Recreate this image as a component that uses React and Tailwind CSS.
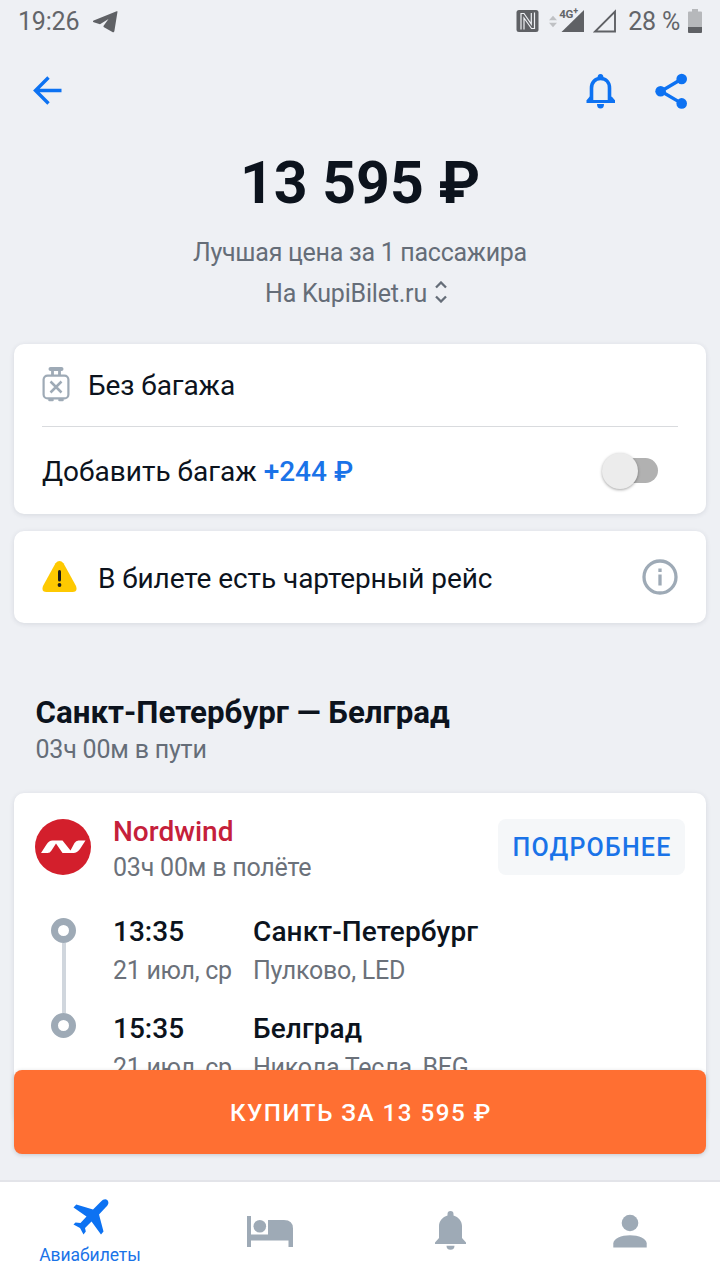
import { useState } from "react";

const stops = [
  { time: "13:35", date: "21 июл, ср", city: "Санкт-Петербург", airport: "Пулково, LED" },
  { time: "15:35", date: "21 июл, ср", city: "Белград", airport: "Никола Тесла, BEG" },
];

const StatusBar = () => (
  <div className="flex h-[42px] shrink-0 items-center pl-[18px] pr-[18px] text-[25px] tracking-[-0.2px] text-[#636569]">
    <span className="mt-px">19:26</span>
    <svg className="ml-[14px] mt-px h-[22px] w-[25px]" viewBox="0 0 25 22" fill="#5f6165">
      <path d="M24.500.8 21.400 20c-.2 1-1 1.600-2 1.100L11 16.200c-.8-.6-.7-1.100-.2-1.700L15.500 8 7 13.300l-6.300-2c-1.200-.5-1.200-1.300 0-1.800L23 .6c1-.4 1.600-.4 1.500.2Z" />
    </svg>
    <div className="ml-auto flex items-center">
      <svg className="h-[22px] w-[23px]" viewBox="0 0 23 22">
        <rect x=".5" width="22" height="22" rx="2.500" fill="#5f6165" />
        <path d="M5 19.500V3.500H8l7.300 10.500V3M18.500 2.500v16h-3L8 8v11.500" fill="none" stroke="#eef0f4" strokeWidth="1.200" />
      </svg>
      <svg className="ml-[10px] h-[13px] w-[8px]" viewBox="0 0 9 13" fill="#bfc1c4">
        <path d="M4.500 0 9 5H0ZM4.500 13 0 8h9Z" />
      </svg>
      <div className="relative">
        <svg className="ml-[4px] h-[24px] w-[24px]" viewBox="0 0 24 24" fill="#5f6165">
          <path d="M23 1v22H.5Z" />
        </svg>
        <span className="absolute -top-[2px] left-[2px] flex text-[11.5px] leading-[14px] font-bold">
          4G<span className="-mt-[2px] text-[9px] leading-[12px] font-bold">+</span>
        </span>
      </div>
      <svg className="ml-[8px] h-[24px] w-[24px]" viewBox="0 0 24 24" fill="none" stroke="#5f6165" strokeWidth="1.900">
        <path d="M22 2.500v20H2Z" />
      </svg>
      <span className="mt-px ml-[11px]">28 %</span>
      <svg className="ml-[8px] h-[24px] w-[14px]" viewBox="0 0 14 24">
        <path d="M4 0h6v2.500h3q1 0 1 1V18H0V3.500q0-1 1-1h3Z" fill="#b6b8bb" />
        <path d="M0 18h14v5q0 1-1 1H1q-1 0-1-1Z" fill="#5f6165" />
      </svg>
    </div>
  </div>
);

const TopBar = () => (
  <div className="flex h-[98px] shrink-0 items-center justify-between pl-[33px] pr-[31px]">
    <button>
      <svg className="h-[30px] w-[30px]" viewBox="0 0 30 30" fill="none" stroke="#0d72f2" strokeWidth="3.400">
        <path d="M15.500 1.500 2.500 14.500l13 13M3 14.500h25.500" />
      </svg>
    </button>
    <div className="flex gap-[39px]">
      <button>
        <svg className="h-[36px] w-[30px]" viewBox="0 0 30 36" fill="none" stroke="#0d72f2">
          <path d="M5.500 27.500V15c0-5.500 3.500-9.500 9-9.500s9 4 9 9.500v12.500" strokeWidth="3.600" />
          <path d="M.5 28.500h28.500M2 28l3-3.500M27.500 28l-3-3.500" strokeWidth="3.200" />
          <path d="M11.500 5a3 4 0 0 1 6 0ZM11 31h7a3.500 4.500 0 0 1-7 0Z" fill="#0d72f2" stroke="none" />
        </svg>
      </button>
      <button>
        <svg className="h-[36px] w-[34px]" viewBox="0 0 34 36" fill="#0d72f2" stroke="#0d72f2">
          <path d="M26.700 6 6 18.200 26.700 30.400" fill="none" strokeWidth="3.400" />
          <g stroke="none">
            <circle cx="26.700" cy="6" r="5.300" />
            <circle cx="5.600" cy="18.200" r="5.300" />
            <circle cx="26.700" cy="30.400" r="5.300" />
          </g>
        </svg>
      </button>
    </div>
  </div>
);

const BaggageIcon = () => (
  <svg className="-mt-[2px] h-[35px] w-[28px]" viewBox="0 0 28 35" fill="none" stroke="#9eaab6" strokeWidth="2.200">
    <path d="M8.500 2h11" strokeWidth="4" strokeLinecap="round" />
    <path d="M10.500 3v5M17.500 3v5" strokeWidth="2.800" />
    <rect x="1.600" y="8.600" width="24.800" height="22.800" rx="4" />
    <path d="m8.500 14.500 11 11m0-11-11 11" strokeWidth="2.500" />
    <path d="M7.500 33h3M17.500 33h3" strokeWidth="2.600" strokeLinecap="round" />
  </svg>
);

const Card = ({ className = "", children }) => (
  <div className={`mx-[14px] rounded-[10px] bg-white shadow-[0_1px_5px_rgba(40,50,70,0.12)] ${className}`}>
    {children}
  </div>
);

const Baggage = () => {
  const [isOn, setIsOn] = useState(false);

  return (
    <Card className="mt-[30px] h-[170px] px-[28px]">
      <div className="flex h-[83px] items-center border-b border-[#d9dbde] text-[28px]">
        <BaggageIcon />
        <span className="ml-[18px] mt-px tracking-[-0.1px]">Без багажа</span>
      </div>
      <div className="flex h-[87px] items-center justify-between pr-[20px] text-[28px]">
        <span className="mt-[3px]">
          Добавить багаж <span className="font-medium text-[#1a73e8]">+244 ₽</span>
        </span>
        <button
          onClick={() => setIsOn(!isOn)}
          className={`flex h-[25px] w-[54px] items-center rounded-full ${isOn ? "justify-end bg-[#8dbcf8]" : "bg-[#b1b1b1]"}`}
        >
          <span className="-ml-[2px] h-[36px] w-[36px] shrink-0 rounded-full bg-[#ececec] shadow-[0_1px_3px_rgba(0,0,0,0.35)]" />
        </button>
      </div>
    </Card>
  );
};

const CharterNotice = () => (
  <Card className="mt-[17px] flex h-[92px] items-center px-[28px]">
    <svg className="h-[32px] w-[35px]" viewBox="0 0 35 32">
      <path d="M13.500 2.300Q17.500-2.200 21.500 2.300L34 25q2 6-3.500 6h-26q-5.500 0-3.500-6Z" fill="#fec901" />
      <path d="M17.500 10.500v8.500" stroke="#1a1a1a" strokeWidth="3" strokeLinecap="round" />
      <circle cx="17.500" cy="24" r="1.900" fill="#1a1a1a" />
    </svg>
    <span className="ml-[21px] mt-[3px] text-[28px] tracking-[-0.07px]">В билете есть чартерный рейс</span>
    <svg className="ml-auto h-[36px] w-[36px]" viewBox="0 0 36 36" fill="none" stroke="#9eaab6" strokeWidth="3.300">
      <circle cx="18" cy="18" r="16" />
      <path d="M18 15.500v11M18 9.500v3.500" />
    </svg>
  </Card>
);

const Flight = () => (
  <Card className="mt-[25px] h-[330px] px-[21px] pt-[19px]">
    <div className="flex">
      <svg className="mt-[7px] h-[56px] w-[56px]" viewBox="0 0 56 56">
        <circle cx="28" cy="28" r="28" fill="#d31f2c" />
        <path
          d="M6 34 11.500 25.500Q14 21.500 17.500 21.500H27.500L35.500 31.500 39.500 24Q41 21.500 43.500 21.500H50.500L45 30Q42 34 38.500 34H27.500L21 24.500 16.500 31.500Q15 34 12.500 34Z"
          fill="#fff"
        />
      </svg>
      <div className="ml-[22px]">
        <div className="pt-px text-[28px] leading-[38px] font-medium text-[#c5203a]">Nordwind</div>
        <div className="text-[25px] leading-[34px] tracking-[-0.2px] text-[#6b717a]">03ч 00м в полёте</div>
      </div>
      <button className="mt-[7px] ml-auto h-[56px] w-[187px] rounded-[8px] bg-[#f5f7f9] pt-[2px] pl-px text-[25px] font-medium tracking-[1.2px] text-[#1a73e8]">
        ПОДРОБНЕЕ
      </button>
    </div>
    <div className="mt-[25px] flex">
      <div className="ml-[16px] flex h-[122px] w-[25px] flex-col items-center">
        <span className="mt-[8px] h-[25px] w-[25px] shrink-0 rounded-full border-[7.5px] border-[#9eaab6]" />
        <span className="h-[70px] w-[4px] shrink-0 bg-[#d0d6dd]" />
        <span className="h-[25px] w-[25px] shrink-0 rounded-full border-[7.5px] border-[#9eaab6]" />
      </div>
      <div className="ml-[37px] pt-px">
        {stops.map((stop) => (
          <div key={stop.time} className="grid h-[97px] grid-cols-[140px_auto] grid-rows-[41px_38px]">
            <span className="text-[28px] leading-[41px] font-medium">{stop.time}</span>
            <span className="text-[28px] leading-[41px] font-medium tracking-[0.1px]">{stop.city}</span>
            <span className="text-[25px] leading-[38px] tracking-[-0.3px] text-[#6b717a]">{stop.date}</span>
            <span className="text-[25px] leading-[38px] tracking-[-0.22px] text-[#6b717a]">{stop.airport}</span>
          </div>
        ))}
      </div>
    </div>
  </Card>
);

const BottomNav = () => (
  <nav className="grid h-[100px] shrink-0 grid-cols-4 border-t-2 border-[#e3e4e9] bg-white">
    <div className="flex flex-col items-center pt-[17px] text-[#1a73e8]">
      <svg className="ml-[2px] h-[36px] w-[36px]" viewBox="0 0 36 36" fill="#0d72f2">
        <path d="M27.500 3c3-3 5-3.200 7-1.800 1.500 2 1.200 4.300-1.500 6.800L26 15.500l4.500 17-2.500 3L18.500 22.500 12 29l.8 3.500L10.500 35.500 7 29 .5 25.500 2.500 23.500l5 .6L13.500 17.500.5 8.500 3.300 5.500 20 10.500Z" />
      </svg>
      <span className="mt-[8px] text-[17.5px] leading-[24px] tracking-[-0.05px]">Авиабилеты</span>
    </div>
    <div className="flex items-center justify-center">
      <svg className="h-[32px] w-[46px]" viewBox="0 0 46 32" fill="#9eaab6">
        <path d="M0 1h4v18.500h17V5h16q9 0 9 8.500v18.500h-4.500v-6.500H4v6.500H0Z" />
        <circle cx="12.800" cy="11.300" r="6.300" />
      </svg>
    </div>
    <div className="flex items-center justify-center">
      <svg className="-mt-px h-[39px] w-[31px]" viewBox="0 0 31 39" fill="#9eaab6">
        <path d="M12.500 4.500V3a3 3 0 0 1 6 0v1.500c5 1.500 8.500 5.500 8.500 10.500V27l4 4.500v1.500H0v-1.500l4-4.500V15C4 10 7.500 6 12.500 4.500ZM11.500 34.800h8a4 4 0 0 1-8 0Z" />
      </svg>
    </div>
    <div className="flex items-center justify-center">
      <svg className="h-[34px] w-[34px]" viewBox="0 0 34 34" fill="#9eaab6">
        <circle cx="17" cy="9" r="8.300" />
        <path d="M.3 33.500v-4c0-5 8-8.300 16.700-8.300s16.700 3.300 16.700 8.300v4Z" />
      </svg>
    </div>
  </nav>
);

const App = () => {
  return (
    <div className="flex h-[1280px] w-[720px] flex-col overflow-hidden bg-[#eef0f4] font-['Roboto',sans-serif] text-[#0c131d]">
      <StatusBar />
      <TopBar />
      <main className="relative min-h-0 flex-1">
        <div className="pt-[8px] text-center text-[#656d78]">
          <h1 className="text-[59px] leading-[70px] font-bold text-[#0c131d]">13 595 ₽</h1>
          <p className="mt-[14px] text-[25px] leading-[41px] tracking-[-0.27px]">Лучшая цена за 1 пассажира</p>
          <p className="flex items-center justify-center pr-[8px] text-[25px] leading-[41px] tracking-[-0.2px]">
            На KupiBilet.ru
            <svg className="-mt-[4px] ml-[8px] h-[22px] w-[12px]" viewBox="0 0 12 22" fill="none" stroke="#656d78" strokeWidth="2.300">
              <path d="m1 6.500 5-5 5 5M1 15.500l5 5 5-5" />
            </svg>
          </p>
        </div>
        <Baggage />
        <CharterNotice />
        <div className="mt-[69px] pl-[35.500px]">
          <h2 className="pt-px text-[31.3px] leading-[40px] font-bold">Санкт-Петербург — Белград</h2>
          <p className="-mt-px text-[25px] leading-[36px] tracking-[-0.2px] text-[#656d78]">03ч 00м в пути</p>
        </div>
        <Flight />
        {/* Buy button floats over the flight details */}
        <button className="absolute inset-x-[14px] bottom-[26px] h-[84px] rounded-[8px] bg-[#ff6f32] pt-[2px] pl-[2px] text-[24.2px] font-medium tracking-[1.5px] text-white shadow-[0_1px_4px_rgba(40,50,70,0.2)]">
          КУПИТЬ ЗА 13 595 ₽
        </button>
      </main>
      <BottomNav />
    </div>
  );
};

export default App;
